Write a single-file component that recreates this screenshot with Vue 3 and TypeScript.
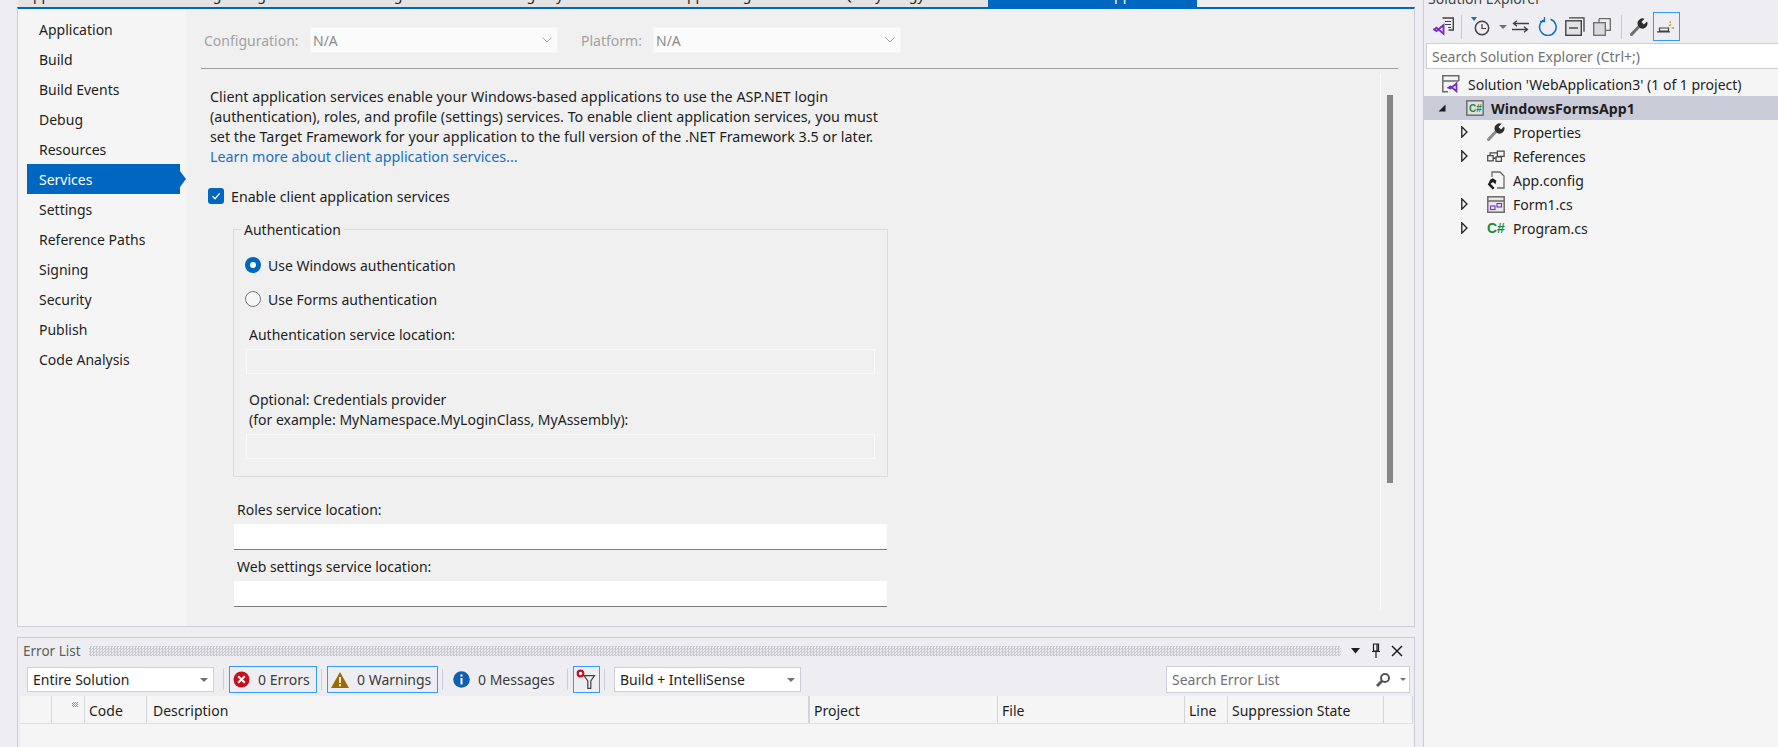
<script setup lang="ts">
const navItems: string[] = ['Application', 'Build', 'Build Events', 'Debug', 'Resources', 'Services', 'Settings', 'Reference Paths', 'Signing', 'Security', 'Publish', 'Code Analysis']
const tabs = [
  { label: 'Application', width: 152 },
  { label: 'Pricing', width: 49 },
  { label: 'Billing', width: 127 },
  { label: 'Catalog', width: 158 },
  { label: 'Registry', width: 168 },
  { label: 'Applied', width: 49 },
  { label: 'Log', width: 115 },
  { label: 'Query', width: 51 },
  { label: 'Logy', width: 101 }
]
const columns = [
  { label: '', width: 32 }, { label: '', width: 33 }, { label: 'Code', width: 62 }, { label: 'Description', width: 663 },
  { label: 'Project', width: 188 }, { label: 'File', width: 187 }, { label: 'Line', width: 43 }, { label: 'Suppression State', width: 156 }, { label: '', width: 29 }
]
</script>

<template>
  <div class="app">
    <aside class="strip"><span class="strip-text">Data Sources</span></aside>

    <div class="center">
      <div class="tabs">
        <span v-for="t in tabs" :key="t.label" class="tab" :style="{ width: t.width + 'px' }">{{ t.label }}</span>
        <span class="tab tab-active">WindowsFormsApp1</span>
      </div>

      <section class="editor">
        <nav class="nav">
          <div v-for="n in navItems" :key="n" class="nav-item" :class="{ active: n === 'Services' }">{{ n }}</div>
        </nav>
        <div class="page">
          <header class="config">
            <span class="cfg-label cfg-first">Configuration:</span>
            <div class="cfg-select">N/A
              <svg class="chev" width="10" height="6" viewBox="0 0 10 6"><path d="M.5.5 5 5 9.500.5" fill="none" stroke="#a8a8a8"/></svg>
            </div>
            <span class="cfg-label cfg-second">Platform:</span>
            <div class="cfg-select">N/A
              <svg class="chev" width="10" height="6" viewBox="0 0 10 6"><path d="M.5.5 5 5 9.500.5" fill="none" stroke="#a8a8a8"/></svg>
            </div>
          </header>
          <div class="page-body">
            <div class="form">
              <p class="intro">Client application services enable your Windows-based applications to use the ASP.NET login<br>(authentication), roles, and profile (settings) services. To enable client application services, you must<br>set the Target Framework for your application to the full version of the .NET Framework 3.5 or later.<br><a class="link">Learn more about client application services...</a></p>
              <label class="check-row">
                <span class="check"><svg width="10" height="10" viewBox="0 0 10 10"><path d="M1.500 5.300 4 7.800 8.600 2.300" fill="none" stroke="#fff" stroke-width="1.300"/></svg></span>
                <span class="txt wide">Enable client application services</span>
              </label>
              <fieldset class="group">
                <legend>Authentication</legend>
                <div class="radio-row first"><span class="radio on"></span><span class="txt">Use Windows authentication</span></div>
                <div class="radio-row second"><span class="radio"></span><span class="txt">Use Forms authentication</span></div>
                <div class="in-label auth">Authentication service location:</div>
                <div class="dis-input"></div>
                <div class="in-label opt">Optional: Credentials provider<br>(for example: MyNamespace.MyLoginClass, MyAssembly):</div>
                <div class="dis-input"></div>
              </fieldset>
              <div class="out-label roles">Roles service location:</div>
              <div class="text-input"></div>
              <div class="out-label web">Web settings service location:</div>
              <div class="text-input"></div>
            </div>
            <div class="vscroll"><div class="thumb"></div></div>
          </div>
        </div>
      </section>

      <section class="errors">
        <div class="err-title">
          <span class="err-name">Error List</span>
          <span class="grip"></span>
          <svg class="win-ico" width="11" height="6" viewBox="0 0 11 6"><path d="M1 0h9L5.500 5.500z" fill="#1e1e1e"/></svg>
          <svg class="win-ico pin" width="10" height="15" viewBox="0 0 10 15"><path d="M2.500 1h5v7h-5zM6 1v7M1 8.500h8M5 9v6" fill="none" stroke="#1e1e1e" stroke-width="1.200"/></svg>
          <svg class="win-ico close" width="12" height="12" viewBox="0 0 12 12"><path d="M1 1l10 10M11 1 1 11" fill="none" stroke="#1e1e1e" stroke-width="1.500"/></svg>
        </div>
        <div class="err-tools">
          <div class="combo">Entire Solution<i class="caret"></i></div>
          <i class="sep sep-first"></i>
          <button class="tbtn b-err">
            <svg width="17" height="17" viewBox="0 0 17 17"><circle cx="8.500" cy="8.500" r="8" fill="#c5111c"/><path d="M5.200 5.200l6.600 6.600M11.800 5.200l-6.600 6.600" stroke="#fff" stroke-width="2"/></svg>
            0 Errors
          </button>
          <i class="sep"></i>
          <button class="tbtn b-warn">
            <svg width="18" height="16" viewBox="0 0 18 16"><path d="M9 0 18 16H0z" fill="#9a6a06"/><path d="M9 5v6M9 12.300v2" stroke="#fff" stroke-width="1.700"/></svg>
            0 Warnings
          </button>
          <i class="sep"></i>
          <div class="tbtn b-msg">
            <svg width="17" height="17" viewBox="0 0 17 17"><circle cx="8.500" cy="8.500" r="8.300" fill="#0e5fb4"/><path d="M8.500 7v6.500M8.500 3.500v2" stroke="#fff" stroke-width="2"/></svg>
            0 Messages
          </div>
          <i class="sep"></i>
          <button class="tbtn b-filter">
            <svg width="21" height="21" viewBox="0 0 21 21"><path d="M8 6.700h10.500l-3.700 5.300v7.300h-3v-7.300z" fill="none" stroke="#424242" stroke-width="1.200"/><circle cx="4.500" cy="4.500" r="2.800" fill="#fff" stroke="#c5111c" stroke-width="2.200"/></svg>
          </button>
          <i class="sep sep-last"></i>
          <div class="combo combo2">Build + IntelliSense<i class="caret"></i></div>
          <div class="err-search">Search Error List
            <svg class="mag" width="16" height="16" viewBox="0 0 16 16"><circle cx="10" cy="6" r="4" fill="none" stroke="#555" stroke-width="2"/><path d="M7 9 2 14" stroke="#555" stroke-width="2.800"/></svg>
            <i class="caret small"></i>
          </div>
        </div>
        <div class="err-table">
          <div class="err-head">
            <div v-for="(c, i) in columns" :key="i" class="err-col" :class="{ thick: c.label === 'Project' }" :style="{ width: c.width + 'px' }">{{ c.label }}</div>
          </div>
        </div>
      </section>
    </div>

    <div class="gutter"></div>

    <aside class="sol">
      <div class="sol-title"><span>Solution Explorer</span></div>
      <div class="sol-tools">
        <svg class="st i1" width="21" height="19" viewBox="0 0 21 19"><path d="M9.500 1h10.800v12h-4.800" fill="none" stroke="#424242" stroke-width="1.400"/><path d="M12 4.500h6M12 7.500h6M15 10.500h3" stroke="#424242"/><path d="M1 12.500l2.500-1.800 7 6V8l-7 6L1 12.500z" fill="none" stroke="#7b2fc0" stroke-width="1.900"/></svg>
        <i class="st-sep"></i>
        <svg class="st i2" width="19" height="19" viewBox="0 0 19 19"><path d="M0 0h6L3 4z" fill="#0e70c0"/><circle cx="11" cy="11" r="6.700" fill="none" stroke="#424242" stroke-width="1.500"/><path d="M11 7v4.500H15" fill="none" stroke="#424242" stroke-width="1.200"/></svg>
        <i class="caret st-caret"></i>
        <svg class="st i3" width="17" height="13" viewBox="0 0 17 13"><path d="M17 3.500H2M5 .8 1.500 3.500 5 6.200M0 9.500h15M12 6.800l3.500 2.700-3.500 2.700" fill="none" stroke="#424242" stroke-width="1.300"/></svg>
        <svg class="st i4" width="19" height="19" viewBox="0 0 19 19"><path d="M6 2.800A8.300 8.300 0 1 0 12.500 2.300" fill="none" stroke="#0e70c0" stroke-width="1.500"/><path d="M5.500 0v4.500H1" fill="none" stroke="#0e70c0" stroke-width="1.300" transform="translate(1 0)"/></svg>
        <svg class="st i5" width="20" height="19" viewBox="0 0 20 19"><path d="M4 .8h15v14" fill="none" stroke="#424242" stroke-width="1.300"/><rect x=".8" y="3.800" width="15.500" height="14.500" fill="#e2e2e6" stroke="#424242" stroke-width="1.400"/><path d="M4 11h9" stroke="#424242" stroke-width="1.400"/></svg>
        <svg class="st i6" width="18" height="18" viewBox="0 0 18 18"><path d="M6 .7h11.300v11.600H13" fill="#eeeef2" stroke="#6a6a6a" stroke-width="1.300"/><rect x=".7" y="4.700" width="11.600" height="12.600" fill="#d9d9de" stroke="#6a6a6a" stroke-width="1.300"/><path d="M6 4.700V.7" stroke="#6a6a6a" stroke-width="1.300"/></svg>
        <i class="st-sep sep2"></i>
        <svg class="st i7" width="18" height="18" viewBox="0 0 18 18"><path d="M1.500 16.500 9 8.500" stroke="#6e6e6e" stroke-width="3" stroke-linecap="round"/><path d="M8 7.500a5 5 0 0 1 6.500-6.700L11.500 4l2.500 2.500L17 3.500a5 5 0 0 1-7 6.500z" fill="#2d2d2d"/></svg>
        <div class="st-active">
          <svg width="20" height="13" viewBox="0 0 20 13"><path d="M0 11.800h13M2.500 11V8h9v3z" fill="none" stroke="#424242" stroke-width="1.200"/><path d="M12 6l2-1.500M14.500 8h2.500M13 1.500 13.500 3" stroke="#c09a2c" stroke-width="1.500"/></svg>
        </div>
      </div>
      <div class="sol-search">Search Solution Explorer (Ctrl+;)</div>
      <div class="tree">
        <div class="row d0">
          <svg class="ti" width="19" height="18" viewBox="0 0 19 18"><path d="M.8 6h16M6 16.800H.8V.8h16V6" fill="none" stroke="#6a6a6a" stroke-width="1.500"/><path d="M6.500 12.800l2-1.500 6 5V8.500l-6 5-2-.7z" fill="none" stroke="#7b2fc0" stroke-width="1.800"/></svg>
          <span>Solution 'WebApplication3' (1 of 1 project)</span>
        </div>
        <div class="row d1 selected">
          <svg class="ex" width="8" height="8" viewBox="0 0 8 8"><path d="M7.500.5v7h-7z" fill="#1e1e1e"/></svg>
          <svg class="ti" width="18" height="16" viewBox="0 0 18 16"><rect x=".8" y=".8" width="16.400" height="14.400" fill="#dfe0e4" stroke="#707070" stroke-width="1.500"/><text x="3" y="11.500" class="cs">C#</text></svg>
          <span>WindowsFormsApp1</span>
        </div>
        <div class="row d2">
          <svg class="ex" width="7" height="12" viewBox="0 0 7 12"><path d="M.8.8v10.400L6 6z" fill="none" stroke="#1e1e1e" stroke-width="1.300"/></svg>
          <svg class="ti" width="18" height="18" viewBox="0 0 18 18"><path d="M1.500 16.500 9 8.500" stroke="#8a8a8a" stroke-width="3" stroke-linecap="round"/><path d="M8 7.500a5 5 0 0 1 6.500-6.700L11.500 4l2.500 2.500L17 3.500a5 5 0 0 1-7 6.500z" fill="#2d2d2d"/></svg>
          <span>Properties</span>
        </div>
        <div class="row d2">
          <svg class="ex" width="7" height="12" viewBox="0 0 7 12"><path d="M.8.8v10.400L6 6z" fill="none" stroke="#1e1e1e" stroke-width="1.300"/></svg>
          <svg class="ti" width="18" height="12" viewBox="0 0 20 13"><path d="M11.500 1h7.500v6h-7.500zM.8 6h6v6h-6zM10 7.500h6v5h-6zM7 9h3M3.500 6V3h8" fill="none" stroke="#4a4a4a" stroke-width="1.400"/></svg>
          <span>References</span>
        </div>
        <div class="row d2">
          <i class="ex-blank"></i>
          <svg class="ti" width="18" height="19" viewBox="0 0 18 19"><path d="M5 6V1h8l4 4v12H10" fill="none" stroke="#6a6a6a" stroke-width="1.300"/><path d="M.8 13.500l4.800 5 2-1.500-4-4.200 2.400-1.800 2.400 2.300 1-3.600-3.500-2.400-2.500 1.200z" fill="#1e1e1e"/></svg>
          <span>App.config</span>
        </div>
        <div class="row d2">
          <svg class="ex" width="7" height="12" viewBox="0 0 7 12"><path d="M.8.8v10.400L6 6z" fill="none" stroke="#1e1e1e" stroke-width="1.300"/></svg>
          <svg class="ti" width="18" height="17" viewBox="0 0 18 17"><rect x=".8" y=".8" width="16.400" height="15.400" fill="#e8e8ec" stroke="#6a6a6a" stroke-width="1.500"/><path d="M1 5h16" stroke="#6a6a6a" stroke-width="1.500"/><rect x="3.500" y="10" width="4.500" height="3.500" fill="none" stroke="#7b2fc0" stroke-width="1.100"/><rect x="10" y="7.500" width="4.500" height="3.500" fill="none" stroke="#7b2fc0" stroke-width="1.100"/></svg>
          <span>Form1.cs</span>
        </div>
        <div class="row d2">
          <svg class="ex" width="7" height="12" viewBox="0 0 7 12"><path d="M.8.8v10.400L6 6z" fill="none" stroke="#1e1e1e" stroke-width="1.300"/></svg>
          <svg class="ti" width="18" height="14" viewBox="0 0 18 14"><text x="0" y="12" class="cs big">C#</text></svg>
          <span>Program.cs</span>
        </div>
      </div>
    </aside>
  </div>
</template>

<style>
html, body { margin: 0; background: #eeeef2; }
</style>

<style scoped>
.app { display: flex; width: 1778px; height: 747px; overflow: hidden; background: #eeeef2; color: #1e1e1e; font: 14px/20px "Noto Sans", sans-serif; }
.strip { width: 17px; flex: none; position: relative; overflow: hidden; }
.strip-text { position: absolute; left: -15px; top: 16px; writing-mode: vertical-rl; color: #4a3f78; font-size: 14px; line-height: 18px; }

.center { width: 1398px; flex: none; display: flex; flex-direction: column; }
.tabs { height: 7px; margin-left: 1px; margin-right: 1px; background: #e3e3e3; display: flex; overflow: hidden; flex: none; line-height: 14px; font-size: 14px; }
.tab { display: block; flex: none; height: 14px; margin-top: -12px; padding-left: 6px; box-sizing: border-box; white-space: nowrap; }
.tab-active { height: 20px; padding: 0 0 0 16px; width: 209px; background: #0067c0; color: #fff; }
.tabs::after { content: ""; flex: 1; background: #eeeef2; margin-top: -12px; height: 20px; }

.editor { height: 620px; flex: none; display: flex; box-sizing: border-box; border: solid #cccedb; border-width: 2px 1px 1px; border-top-color: #0067c0; background: #f0f0f0; }
.nav { width: 168px; flex: none; background: #f5f5f5; padding: 5px 6px 0 9px; box-sizing: border-box; }
.nav-item { height: 30px; line-height: 32px; padding-left: 12px; position: relative; }
.nav-item.active { background: #0067c0; color: #fff; }
.nav-item.active::after { content: ""; position: absolute; left: 100%; top: 7px; border: 8px solid transparent; border-left: 6px solid #0067c0; border-right: 0; }
.page { flex: 1; display: flex; flex-direction: column; min-width: 0; }
.config { height: 60px; box-sizing: border-box; flex: none; margin: 0 16px 0 15px; border-bottom: 1px solid #a0a0a0; padding-top: 18px; display: flex; align-items: flex-start; }
.cfg-label { color: #a2a2a2; line-height: 28px; }
.cfg-first { margin-left: 3px; width: 106px; }
.cfg-second { margin-left: 23px; width: 72px; }
.cfg-select { width: 248px; height: 26px; box-sizing: border-box; line-height: 26px; padding-left: 2px; background: #fbfbfb; border: 1px solid #f4f4f4; color: #8c8c8c; position: relative; }
.chev { position: absolute; right: 5px; top: 9px; }
.page-body { flex: 1; display: flex; min-height: 0; }
.form { flex: 1; min-width: 0; padding: 18px 0 0 24px; }
.intro { margin: 0; line-height: 20px; white-space: nowrap; font-size: 14.300px; }
.link { color: #1a6fc4; }
.check-row { display: flex; align-items: center; height: 20px; margin-top: 19px; margin-left: -2px; }
.check { width: 16px; height: 16px; border-radius: 3px; background: #0067c0; margin-right: 7px; display: flex; align-items: center; justify-content: center; }
.txt { padding-top: 2px; }
.txt.wide { font-size: 14.200px; }
.group { width: 655px; height: 258px; box-sizing: border-box; margin: 13px 0 0 23px; padding: 0; border: 1px solid #dcdcdc; min-width: 0; }
.group legend { margin-left: 7px; padding: 0 3px; height: 20px; line-height: 22px; }
.radio-row { display: flex; align-items: center; height: 20px; margin-left: 11px; }
.radio-row.first { margin-top: 16px; }
.radio-row.second { margin-top: 14px; }
.radio { width: 16px; height: 16px; box-sizing: border-box; border-radius: 50%; border: 1px solid #7a7a7a; margin-right: 7px; background: #f6f6f6; }
.radio.on { border: 5px solid #0067c0; background: #fff; }
.in-label { margin-left: 15px; }
.in-label.auth { margin-top: 16px; }
.in-label.opt { margin-top: 16px; }
.dis-input { width: 629px; height: 25px; box-sizing: border-box; margin: 4px 0 0 12px; border: 1px solid #f9f9f9; }
.out-label { margin-left: 27px; }
.out-label.roles { margin-top: 23px; }
.out-label.web { margin-top: 7px; }
.text-input { width: 653px; height: 26px; box-sizing: border-box; margin: 4px 0 0 24px; background: #fff; border-bottom: 1px solid #7a7a7a; }
.vscroll { width: 16px; height: 536px; margin: 5px 18px 0 0; padding-top: 21px; box-sizing: border-box; border-left: 1px solid #fafafa; }
.thumb { width: 6px; height: 388px; margin-left: 6px; background: #868686; }

.errors { margin-top: 10px; height: 110px; flex: none; box-sizing: border-box; border: 1px solid #cccedb; border-bottom: 0; display: flex; flex-direction: column; }
.err-title { height: 25px; display: flex; align-items: center; flex: none; padding-left: 5px; }
.err-name { color: #5e5e5e; font-size: 13.500px; line-height: 26px; width: 66px; }
.grip { width: 1252px; height: 10px; background: repeating-conic-gradient(#c6c6cc 0 25%, transparent 0 50%) 0 0 / 3px 3px; }
.win-ico { flex: none; margin-left: 9px; }
.win-ico.pin { margin-left: 10px; }
.win-ico.close { margin-left: 10px; }
.err-tools { height: 33px; flex: none; display: flex; align-items: flex-start; padding: 3px 0 0 9px; box-sizing: border-box; font-size: 14px; }
.combo { width: 187px; height: 25px; box-sizing: border-box; background: #fff; border: 1px solid #cccedb; padding-left: 5px; line-height: 23px; position: relative; flex: none; margin-top: 1px; }
.caret { position: absolute; right: 5px; top: 10px; border: 4px solid transparent; border-top: 4px solid #717171; border-bottom: 0; }
.sep { width: 1px; height: 21px; background: #ccced6; flex: none; margin: 3px 5px 0 4px; }
.sep-first { margin-left: 9px; }
.sep-last { margin-right: 9px; }
.tbtn { height: 27px; box-sizing: border-box; display: flex; align-items: center; border: 1px solid #3399ff; background: transparent; padding: 0 0 0 3px; font: inherit; color: #3a3a3a; gap: 8px; flex: none; }
.b-err { width: 88px; }
.b-warn { width: 111px; }
.b-msg { width: 115px; border-color: transparent; padding-left: 4px; }
.b-filter { width: 27px; padding: 0 0 0 2px; }
.err-search { margin-left: auto; margin-right: 4px; width: 244px; height: 27px; box-sizing: border-box; background: #fff; border: 1px solid #cccedb; padding-left: 5px; line-height: 25px; color: #717171; position: relative; }
.mag { position: absolute; right: 18px; top: 5px; }
.caret.small { right: 3px; top: 11px; border-width: 3px; border-top-width: 3px; }
.err-table { flex: 1; background: #f5f5f5; margin: 0 1px 0 2px; }
.err-head { height: 28px; display: flex; box-sizing: border-box; border-bottom: 1px solid #dedee4; }
.err-col { height: 27px; flex: none; box-sizing: border-box; border-right: 1px solid #d3d3de; padding-left: 4px; line-height: 29px; position: relative; }
.err-col:nth-child(4) { padding-left: 6px; border-right-width: 2px; }
.err-col:nth-child(5) { padding-left: 4px; }
.err-col:nth-child(2)::after { content: ""; position: absolute; right: 6px; top: 6px; width: 6px; height: 5px; background: repeating-conic-gradient(#9a9a9a 0 25%, transparent 0 50%) 0 0 / 2px 2px; }

.gutter { width: 8px; flex: none; border-right: 1px solid #cccedb; }
.sol { flex: 1; min-width: 0; display: flex; flex-direction: column; }
.sol-title { height: 10px; overflow: hidden; padding-left: 4px; color: #444; font-size: 14px; line-height: 14px; flex: none; }
.sol-title span { display: block; margin-top: -8px; }
.sol-tools { height: 33px; display: flex; align-items: center; padding-left: 9px; flex: none; box-sizing: border-box; position: relative; }
.st { flex: none; }
.st-sep { width: 1px; height: 24px; background: #c9c9d2; margin: 0 9px 0 7px; flex: none; }
.sep2 { margin: 0 8px 0 10px; }
.i3 { margin-left: 5px; }
.i4 { margin-left: 9px; }
.i5, .i6 { margin-left: 8px; }
.st-caret { position: static; margin-left: 9px; border-width: 4px; border-top-width: 4px; }
.st-active { width: 27px; height: 29px; box-sizing: border-box; margin-left: 5px; border: 1px solid #3399ff; display: flex; align-items: center; justify-content: center; flex: none; }
.sol-search { height: 26px; box-sizing: border-box; flex: none; background: #fff; border: 1px solid #cccedb; border-right: 0; margin-left: 2px; padding-left: 5px; line-height: 25px; color: #717171; }
.tree { flex: 1; background: #f5f5f5; padding-top: 3px; }
.row { height: 24px; display: flex; align-items: center; white-space: nowrap; }
.row span { padding-top: 2px; }
.d0 { padding-left: 18px; }
.d0 .ti { margin-right: 7px; }
.d1 { padding-left: 14px; }
.d1 .ex { margin-right: 20px; }
.d1 .ti { margin-right: 7px; }
.d1 span { font-weight: 700; font-size: 14.200px; }
.d2 { padding-left: 37px; }
.d2 .ex { margin-right: 19px; }
.ex-blank { width: 7px; margin-right: 19px; }
.d2 .ti { margin-right: 8px; }
.ti { flex: none; }
.selected { background: #c9cbd9; }
.cs { font: 700 10px "Liberation Sans", sans-serif; fill: #1f8a3c; }
.cs.big { font-size: 14px; }
</style>
